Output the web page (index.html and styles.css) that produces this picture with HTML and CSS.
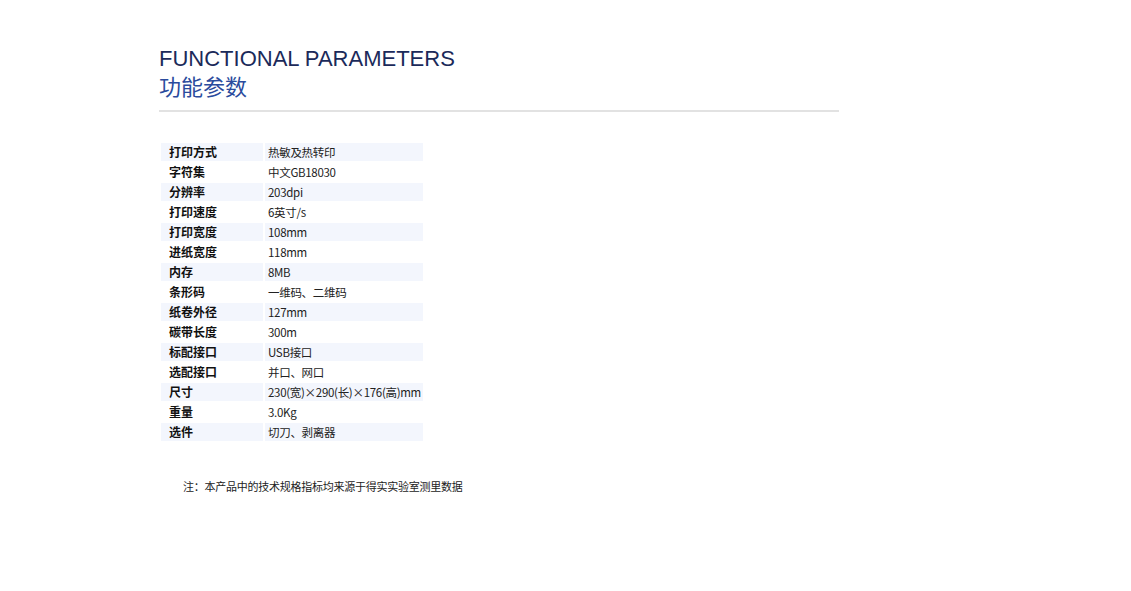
FILE: index.html
```html
<!DOCTYPE html>
<html lang="zh-CN">
<head>
<meta charset="utf-8">
<title>功能参数</title>
<link rel="stylesheet" href="styles.css">
</head>
<body>
<div class="page">
  <div class="heading">
    <div class="heading-en">FUNCTIONAL PARAMETERS</div>
    <div class="heading-cn">功能参数</div>
  </div>
  <table class="params">
    <colgroup><col class="col-label"><col class="col-value"></colgroup>
    <tbody>
      <tr class="alt"><th>打印方式</th><td>热敏及热转印</td></tr>
      <tr><th>字符集</th><td>中文GB18030</td></tr>
      <tr class="alt"><th>分辨率</th><td>203dpi</td></tr>
      <tr><th>打印速度</th><td>6英寸/s</td></tr>
      <tr class="alt"><th>打印宽度</th><td>108mm</td></tr>
      <tr><th>进纸宽度</th><td>118mm</td></tr>
      <tr class="alt"><th>内存</th><td>8MB</td></tr>
      <tr><th>条形码</th><td>一维码、二维码</td></tr>
      <tr class="alt"><th>纸卷外径</th><td>127mm</td></tr>
      <tr><th>碳带长度</th><td>300m</td></tr>
      <tr class="alt"><th>标配接口</th><td>USB接口</td></tr>
      <tr><th>选配接口</th><td>并口、网口</td></tr>
      <tr class="alt"><th>尺寸</th><td>230(宽)×290(长)×176(高)mm</td></tr>
      <tr><th>重量</th><td>3.0Kg</td></tr>
      <tr class="alt"><th>选件</th><td>切刀、剥离器</td></tr>
    </tbody>
  </table>
  <p class="note">注：本产品中的技术规格指标均来源于得实实验室测里数据</p>
</div>
</body>
</html>
```

FILE: styles.css
```css
html, body {
  margin: 0;
  padding: 0;
  background: #ffffff;
}

.page {
  padding: 46px 0 0 159px;
  width: 680px;
  font-family: "Noto Sans CJK SC", "Liberation Sans", sans-serif;
}

.heading {
  border-bottom: 2px solid #e2e2e2;
  padding-bottom: 12px;
}

.heading-en {
  font-family: "Liberation Sans", Arial, sans-serif;
  font-size: 22px;
  line-height: 26px;
  color: #1b2a5a;
}

.heading-cn {
  font-family: "Noto Sans CJK SC", sans-serif;
  font-size: 22px;
  line-height: 26px;
  color: #2a4b9d;
}

.params {
  margin-top: 29px;
  border-collapse: separate;
  border-spacing: 2px;
  table-layout: fixed;
  width: 266px;
  font-size: 12px;
}

.col-label {
  width: 102px;
}

.col-value {
  width: 158px;
}

.params th,
.params td {
  box-sizing: border-box;
  height: 18px;
  line-height: 18px;
  padding: 0;
  vertical-align: middle;
  white-space: nowrap;
  overflow: visible;
}

.params th {
  padding-left: 8px;
  text-align: left;
  font-weight: bold;
  color: #111111;
}

.params td {
  padding-left: 3px;
  color: #222222;
  font-size: 11.5px;
  letter-spacing: -0.3px;
}

.params tr.alt th,
.params tr.alt td {
  background: #f3f6fd;
}

.note {
  margin: 35px 0 0 24px;
  font-size: 11px;
  line-height: 16px;
  letter-spacing: -0.25px;
  color: #222222;
}
```
